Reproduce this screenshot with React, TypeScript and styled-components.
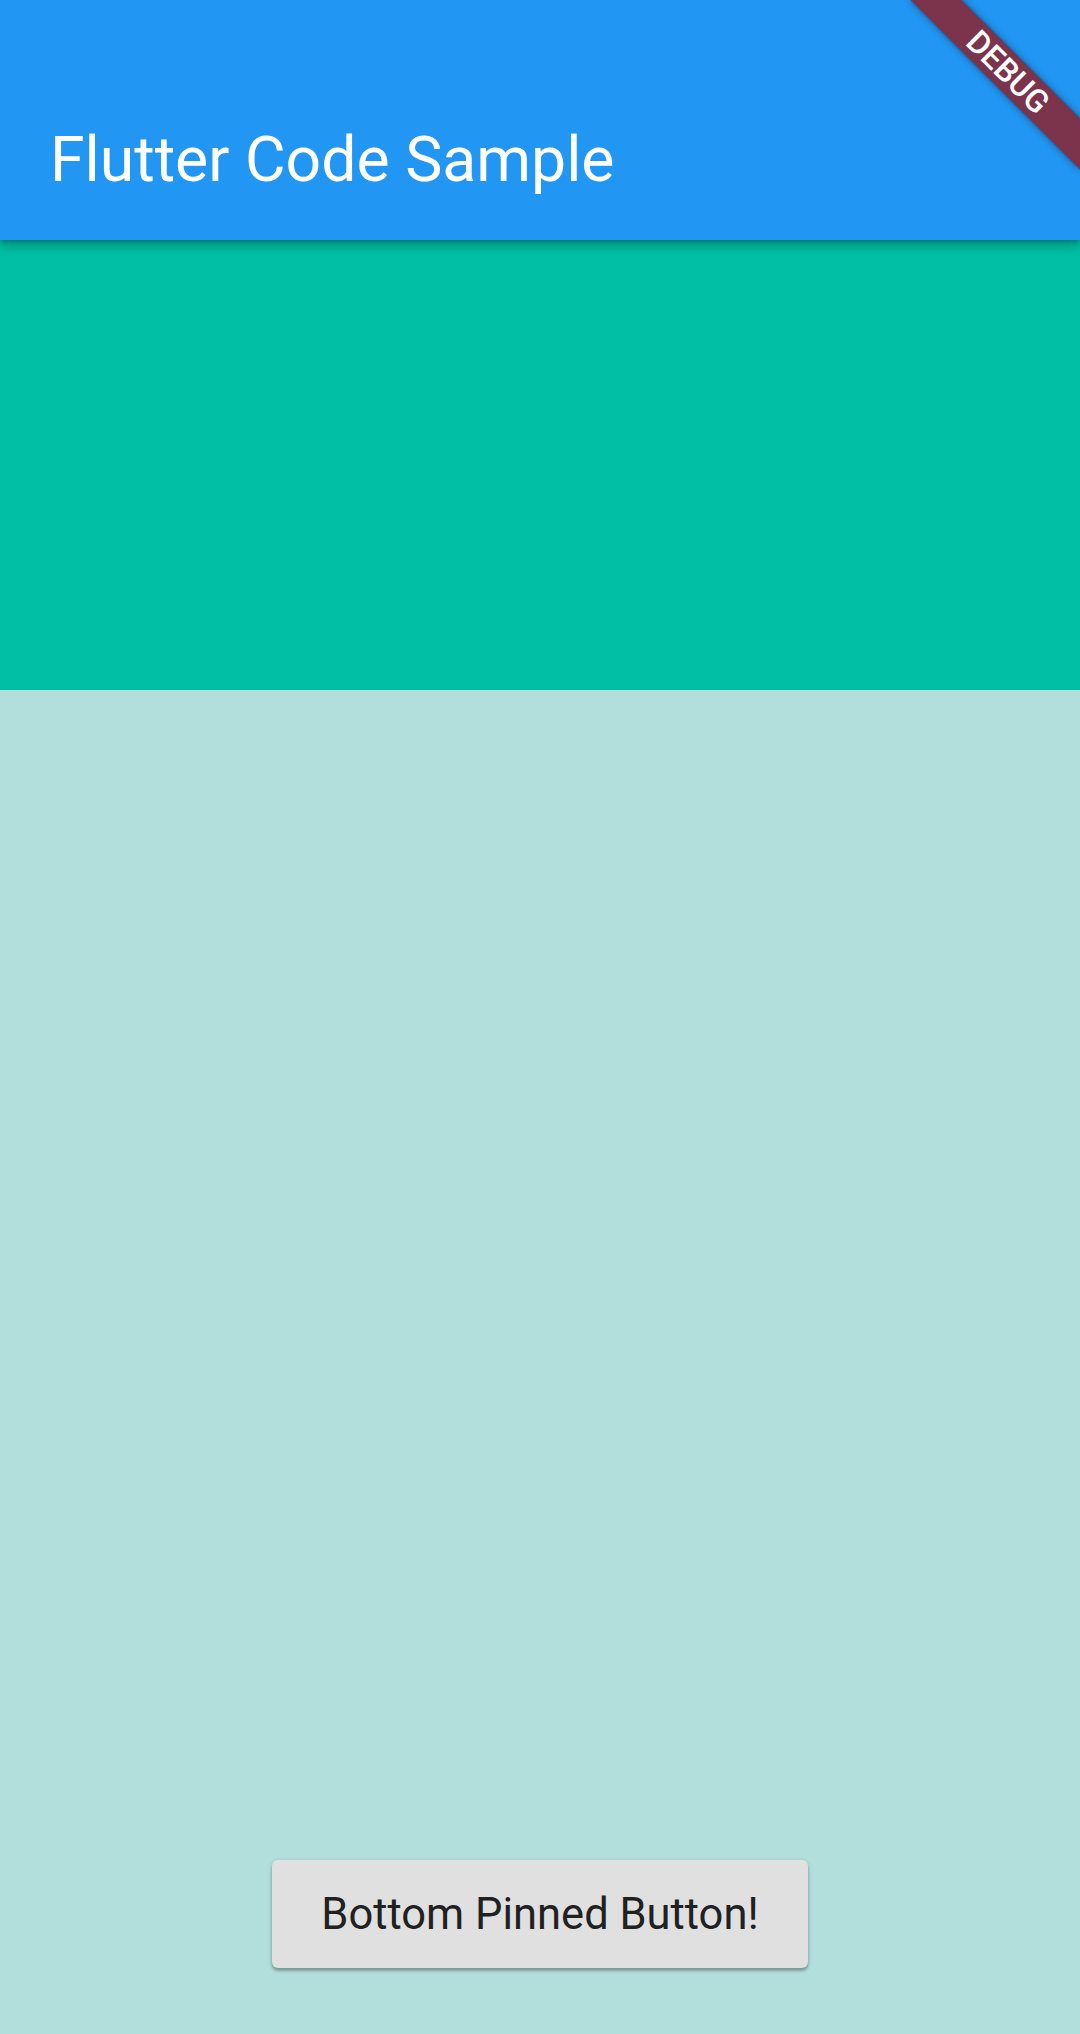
import React from "react";
import styled, { createGlobalStyle } from "styled-components";

const GlobalStyle = createGlobalStyle`
  html, body {
    margin: 0;
    padding: 0;
  }
  body {
    font-family: Roboto, "Noto Sans", "Liberation Sans", sans-serif;
  }
`;

const Screen = styled.div`
  position: relative;
  width: 1080px;
  height: 2034px;
  display: flex;
  flex-direction: column;
  overflow: hidden;
  background-color: #b2dfdb;
`;

const AppBar = styled.header`
  position: relative;
  z-index: 2;
  height: 240px;
  padding: 80px 48px 0 50px;
  box-sizing: border-box;
  display: flex;
  align-items: center;
  background-color: #2196f3;
  box-shadow: 0 6px 10px rgba(0, 0, 0, 0.22), 0 2px 4px rgba(0, 0, 0, 0.18);
`;

const Title = styled.h1`
  margin: 0;
  color: #ffffff;
  font-family: Roboto, "Noto Sans", sans-serif;
  font-size: 62.5px;
  font-weight: 400;
  line-height: 1;
`;

const Header = styled.div`
  height: 450px;
  flex-shrink: 0;
  background-color: #00bfa5;
`;

const Body = styled.main`
  flex: 1;
  display: flex;
  flex-direction: column;
  justify-content: flex-end;
  align-items: center;
  padding-bottom: 66px;
`;

const PinnedButton = styled.button`
  height: 108px;
  padding: 0 49px;
  border: none;
  border-radius: 6px;
  background-color: #e0e0e0;
  color: #212121;
  font-family: Roboto, "Noto Sans", sans-serif;
  font-size: 43.5px;
  font-weight: 400;
  cursor: pointer;
  box-shadow: 0 3px 3px rgba(0, 0, 0, 0.25), 0 1px 5px rgba(0, 0, 0, 0.14);
`;

const DebugBanner = styled.div`
  position: absolute;
  z-index: 5;
  top: 54px;
  left: 888px;
  width: 240px;
  height: 36px;
  display: flex;
  align-items: center;
  justify-content: center;
  transform: rotate(45deg);
  background-color: #7c344c;
  box-shadow: 0 0 6px rgba(0, 0, 0, 0.5);
  color: #ffffff;
  font-family: Roboto, "Noto Sans", sans-serif;
  font-size: 32px;
  font-weight: 500;
  line-height: 1;
  pointer-events: none;
`;

export default function App() {
  return (
    <>
      <GlobalStyle />
      <Screen>
        <AppBar>
          <Title>Flutter Code Sample</Title>
        </AppBar>
        <Header />
        <Body>
          <PinnedButton>Bottom Pinned Button!</PinnedButton>
        </Body>
        <DebugBanner>DEBUG</DebugBanner>
      </Screen>
    </>
  );
}
